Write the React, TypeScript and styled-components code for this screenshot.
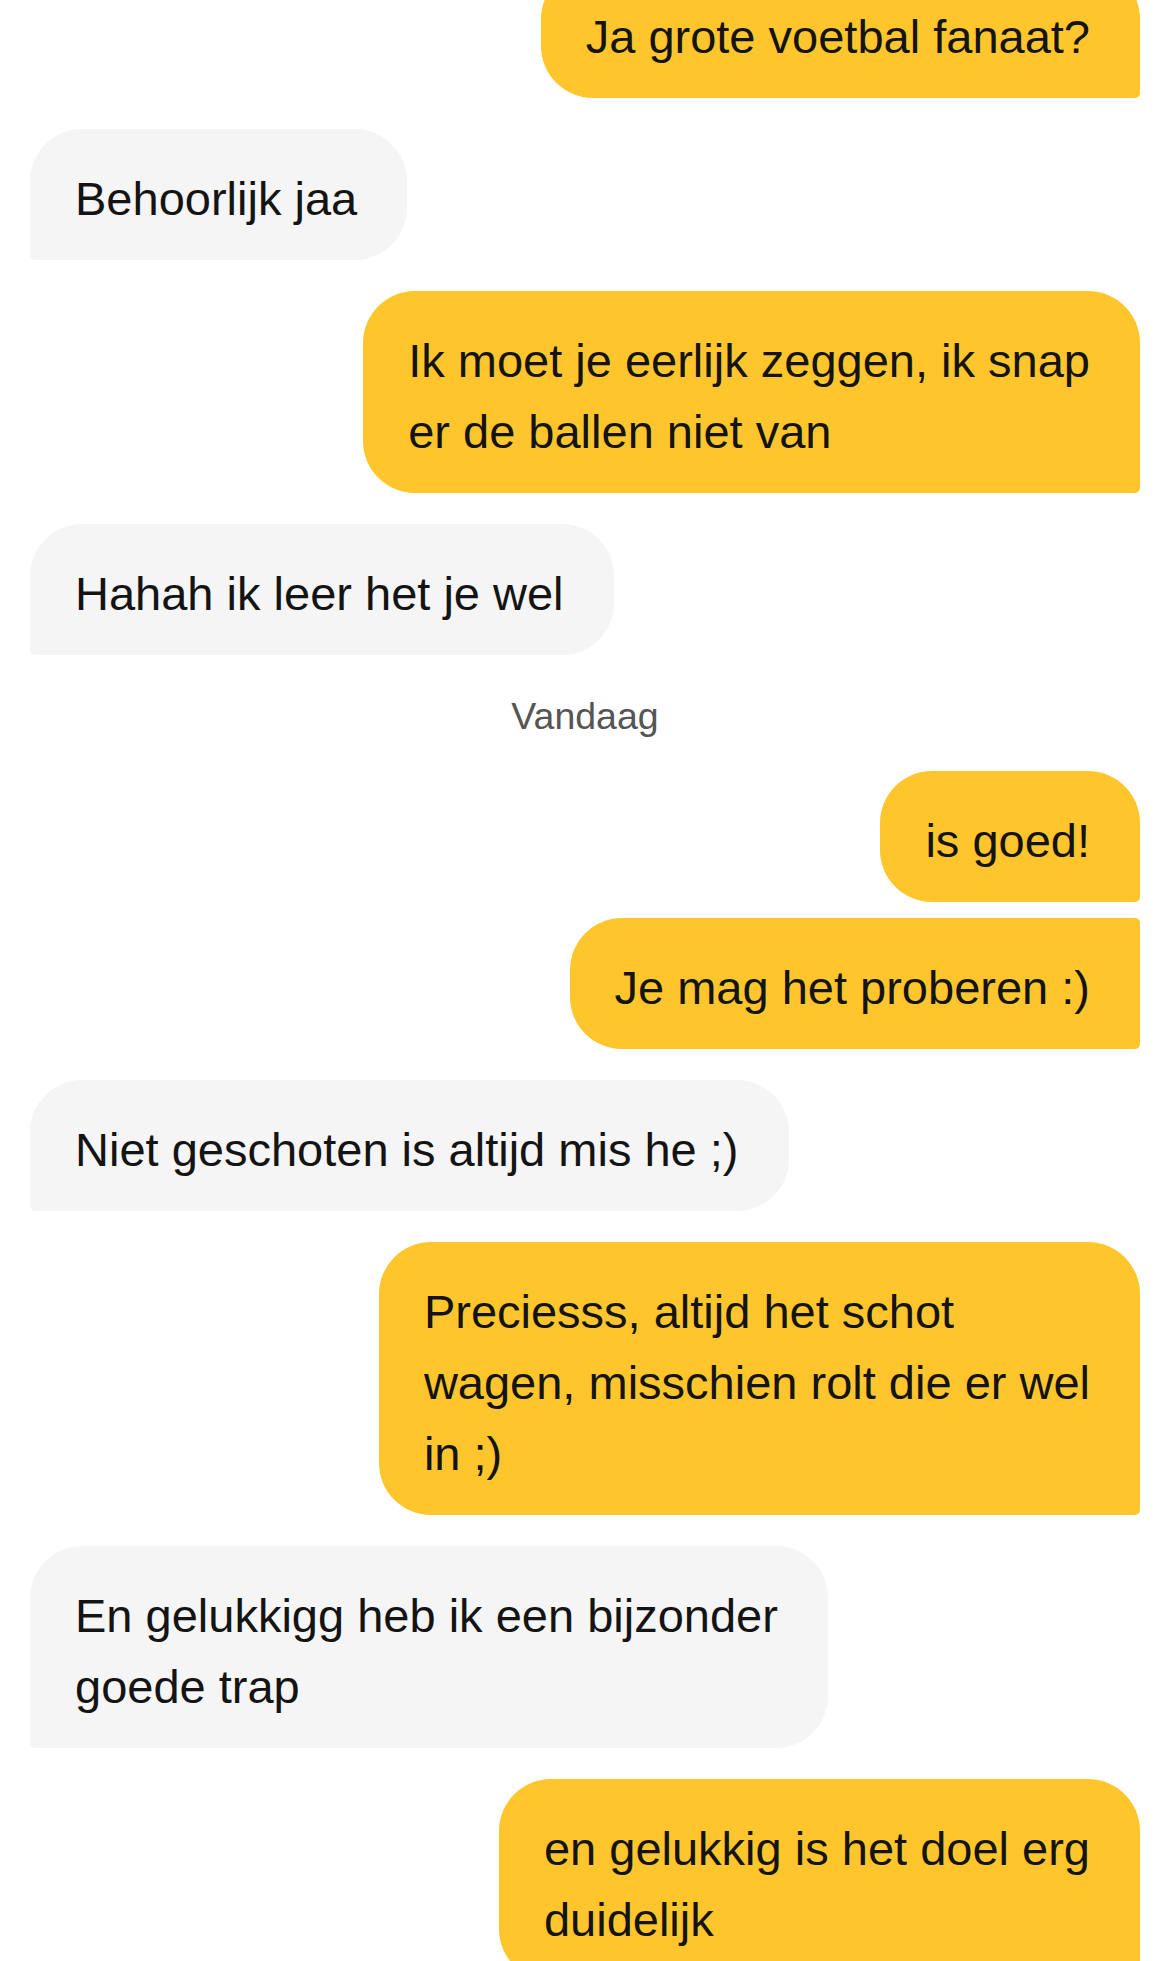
import React from "react";
import styled, { createGlobalStyle, css } from "styled-components";

const GlobalStyle = createGlobalStyle`
  html, body {
    margin: 0;
    padding: 0;
    background: #ffffff;
  }
  body {
    width: 1170px;
    height: 1961px;
    overflow: hidden;
    font-family: "Liberation Sans", Arial, sans-serif;
    -webkit-font-smoothing: antialiased;
  }
`;

type Sender = "me" | "them";

type Item =
  | { kind: "msg"; from: Sender; lines: string[] }
  | { kind: "date"; label: string };

const items: Item[] = [
  { kind: "msg", from: "me", lines: ["Ja grote voetbal fanaat?"] },
  { kind: "msg", from: "them", lines: ["Behoorlijk jaa"] },
  { kind: "msg", from: "me", lines: ["Ik moet je eerlijk zeggen, ik snap", "er de ballen niet van"] },
  { kind: "msg", from: "them", lines: ["Hahah ik leer het je wel"] },
  { kind: "date", label: "Vandaag" },
  { kind: "msg", from: "me", lines: ["is goed!"] },
  { kind: "msg", from: "me", lines: ["Je mag het proberen :)"] },
  { kind: "msg", from: "them", lines: ["Niet geschoten is altijd mis he ;)"] },
  { kind: "msg", from: "me", lines: ["Preciesss, altijd het schot", "wagen, misschien rolt die er wel", "in ;)"] },
  { kind: "msg", from: "them", lines: ["En gelukkigg heb ik een bijzonder", "goede trap"] },
  { kind: "msg", from: "me", lines: ["en gelukkig is het doel erg", "duidelijk"] },
];

// the conversation is scrolled, first bubble sits partly above the top edge
const Thread = styled.div`
  display: flex;
  flex-direction: column;
  padding: 0 30px;
  margin-top: -33px;
`;

const Row = styled.div<{ $mine: boolean; $gap: number }>`
  display: flex;
  justify-content: ${(p) => (p.$mine ? "flex-end" : "flex-start")};
  margin-top: ${(p) => p.$gap}px;
`;

const Bubble = styled.div<{ $mine: boolean; $joined: boolean }>`
  box-sizing: border-box;
  padding: 34px 50px 26px 45px;
  font-size: 47px;
  line-height: 71px;
  color: #141414;
  white-space: nowrap;
  ${(p) =>
    p.$mine
      ? css`
          background: #fec62c;
          border-radius: 52px ${p.$joined ? "5px" : "52px"} 5px 52px;
        `
      : css`
          background: #f5f5f5;
          border-radius: 52px 52px 52px 5px;
        `}
`;

const DateLabel = styled.div`
  margin: 37px 0 31px;
  text-align: center;
  font-size: 37.5px;
  line-height: 48px;
  color: #555555;
`;

export default function App() {
  let prev: Sender | null = null;
  return (
    <>
      <GlobalStyle />
      <Thread>
        {items.map((it, i) => {
          if (it.kind === "date") {
            prev = null;
            return <DateLabel key={i}>{it.label}</DateLabel>;
          }
          const joined = prev === it.from;
          const gap = prev === null ? 0 : joined ? 16 : 31;
          prev = it.from;
          const mine = it.from === "me";
          return (
            <Row key={i} $mine={mine} $gap={gap}>
              <Bubble $mine={mine} $joined={joined}>
                {it.lines.map((l, j) => (
                  <React.Fragment key={j}>
                    {j > 0 && <br />}
                    {l}
                  </React.Fragment>
                ))}
              </Bubble>
            </Row>
          );
        })}
      </Thread>
    </>
  );
}
